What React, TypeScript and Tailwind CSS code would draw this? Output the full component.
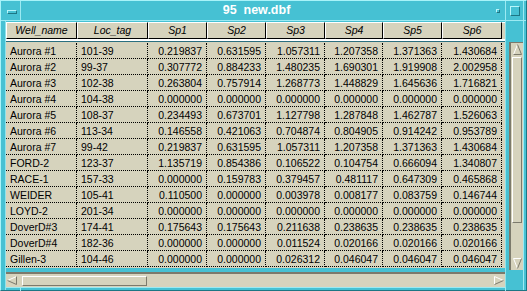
import React from "react";

type Col = { name: string; w: string; left: boolean };

const cols: Col[] = [
  { name: "Well_name", w: "w-[71px]", left: true },
  { name: "Loc_tag", w: "w-[71px]", left: true },
  { name: "Sp1", w: "w-[59px]", left: false },
  { name: "Sp2", w: "w-[59px]", left: false },
  { name: "Sp3", w: "w-[59px]", left: false },
  { name: "Sp4", w: "w-[58px]", left: false },
  { name: "Sp5", w: "w-[59px]", left: false },
  { name: "Sp6", w: "w-[60px]", left: false },
];

const Z = "0.000000";
const rows: string[][] = [
  ["Aurora #1", "101-39", "0.219837", "0.631595", "1.057311", "1.207358", "1.371363", "1.430684"],
  ["Aurora #2", "99-37", "0.307772", "0.884233", "1.480235", "1.690301", "1.919908", "2.002958"],
  ["Aurora #3", "102-38", "0.263804", "0.757914", "1.268773", "1.448829", "1.645636", "1.716821"],
  ["Aurora #4", "104-38", Z, Z, Z, Z, Z, Z],
  ["Aurora #5", "108-37", "0.234493", "0.673701", "1.127798", "1.287848", "1.462787", "1.526063"],
  ["Aurora #6", "113-34", "0.146558", "0.421063", "0.704874", "0.804905", "0.914242", "0.953789"],
  ["Aurora #7", "99-42", "0.219837", "0.631595", "1.057311", "1.207358", "1.371363", "1.430684"],
  ["FORD-2", "123-37", "1.135719", "0.854386", "0.106522", "0.104754", "0.666094", "1.340807"],
  ["RACE-1", "157-33", Z, "0.159783", "0.379457", "0.481117", "0.647309", "0.465868"],
  ["WEIDER", "105-41", "0.110500", Z, "0.003978", "0.008177", "0.083759", "0.146744"],
  ["LOYD-2", "201-34", Z, Z, Z, Z, Z, Z],
  ["DoverD#3", "174-41", "0.175643", "0.175643", "0.211638", "0.238635", "0.238635", "0.238635"],
  ["DoverD#4", "182-36", Z, Z, "0.011524", "0.020166", "0.020166", "0.020166"],
  ["Gillen-3", "104-46", Z, Z, "0.026312", "0.046047", "0.046047", "0.046047"],
];

function Arrow({ dir }: { dir: "up" | "down" | "left" | "right" }) {
  // 9x10 triangles with motif style bevel
  if (dir === "up")
    return (
      <svg width="9" height="11" viewBox="0 0 9 11" className="block">
        <polygon points="4.5,0.5 8.5,10.5 0.5,10.5" fill="#d6d3bd" />
        <line x1="4.5" y1="0.5" x2="0.5" y2="10.5" stroke="#ffffff" strokeWidth="1" />
        <line x1="4.5" y1="0.5" x2="8.5" y2="10.5" stroke="#7c7a6c" strokeWidth="1" />
        <line x1="0.5" y1="10.5" x2="8.5" y2="10.5" stroke="#7c7a6c" strokeWidth="1" />
      </svg>
    );
  if (dir === "down")
    return (
      <svg width="9" height="11" viewBox="0 0 9 11" className="block">
        <polygon points="0.5,0.5 8.5,0.5 4.5,10.5" fill="#d6d3bd" />
        <line x1="0.5" y1="0.5" x2="8.5" y2="0.5" stroke="#ffffff" strokeWidth="1" />
        <line x1="0.5" y1="0.5" x2="4.5" y2="10.5" stroke="#ffffff" strokeWidth="1" />
        <line x1="8.5" y1="0.5" x2="4.5" y2="10.5" stroke="#7c7a6c" strokeWidth="1" />
      </svg>
    );
  if (dir === "left")
    return (
      <svg width="10" height="9" viewBox="0 0 10 9" className="block">
        <polygon points="0.5,4.5 9.5,0.5 9.5,8.5" fill="#d6d3bd" />
        <line x1="0.5" y1="4.5" x2="9.5" y2="0.5" stroke="#ffffff" strokeWidth="1" />
        <line x1="0.5" y1="4.5" x2="9.5" y2="8.5" stroke="#7c7a6c" strokeWidth="1" />
        <line x1="9.5" y1="0.5" x2="9.5" y2="8.5" stroke="#7c7a6c" strokeWidth="1" />
      </svg>
    );
  return (
    <svg width="10" height="9" viewBox="0 0 10 9" className="block">
      <polygon points="0.5,0.5 9.5,4.5 0.5,8.5" fill="#d6d3bd" />
      <line x1="0.5" y1="0.5" x2="9.5" y2="4.5" stroke="#ffffff" strokeWidth="1" />
      <line x1="0.5" y1="0.5" x2="0.5" y2="8.5" stroke="#ffffff" strokeWidth="1" />
      <line x1="0.5" y1="8.5" x2="9.5" y2="4.5" stroke="#7c7a6c" strokeWidth="1" />
    </svg>
  );
}

export default function App() {
  return (
    <div className="relative w-[527px] h-[291px] overflow-hidden bg-[#46c1d3] font-['Liberation_Sans',Arial,sans-serif] text-black">
      <div className="flex flex-col h-full">
        {/* Title bar */}
        <div className="h-[21px] shrink-0 flex border-b border-[#9ceaf2]">
          <div className="w-[21px] shrink-0 border-r border-[#9ceaf2] flex items-center justify-center">
            <div className="w-[10px] h-[4px] mt-[3px] ml-[4px] bg-[#46c1d3] border-t border-l border-[#b8f6fb] border-r-[#1d7684] border-b-[#1d7684] border-r border-b" />
          </div>
          <div className="flex-1 text-center text-white font-bold text-[12.5px] leading-[21px] whitespace-pre">
            95  new.dbf
          </div>
          <div className="w-[13px] shrink-0 flex items-center justify-center">
            <div className="w-[4px] h-[4px] mr-[2px] mt-[1px] bg-[#46c1d3] border border-t-[#b8f6fb] border-l-[#b8f6fb] border-r-[#1d7684] border-b-[#1d7684]" />
          </div>
          <div className="w-[18px] shrink-0 border-l border-[#9ceaf2] flex items-center justify-center">
            <div className="w-[10px] h-[10px] ml-[1px] mt-[1px] border border-t-[#b8f6fb] border-l-[#b8f6fb] border-r-[#1d7684] border-b-[#1d7684]" />
          </div>
          <div className="w-[4px] shrink-0 border-l border-[#9ceaf2]" />
        </div>

        {/* Main */}
        <div className="flex-1 flex">
          <div className="w-[6px] shrink-0 border-r border-[#8ee3ec]" />
          <div className="w-[499px] shrink-0 flex flex-col">
            <div className="h-[1px] shrink-0" />
            {/* header */}
            <div className="h-[17px] shrink-0 flex bg-[#d6d3bd]">
              {cols.map((c) => (
                <div
                  key={c.name}
                  className={`${c.w} shrink-0 h-[17px] border border-t-white border-l-white border-r-black border-b-black italic text-[10.5px] leading-[15px] text-center`}
                >
                  {c.name}
                </div>
              ))}
              <div className="flex-1 border-t border-white" />
            </div>
            <div className="h-[2px] shrink-0 bg-white" />
            <div className="h-[1px] shrink-0 bg-[#2a6f80]" />
            {/* body */}
            <div className="h-[226px] shrink-0 bg-[#d6d3bd] pt-[1px] overflow-hidden">
              {rows.map((r, i) => (
                <div key={i} className="flex h-[16px]">
                  {r.map((v, j) => (
                    <div
                      key={j}
                      className={`${cols[j].w} shrink-0 h-[16px] border-r border-b border-dotted border-black text-[10.5px] leading-[16px] whitespace-nowrap ${
                        cols[j].left ? "pl-[4px] text-left" : "pr-[4px] text-right"
                      }`}
                    >
                      {v}
                    </div>
                  ))}
                </div>
              ))}
            </div>
            <div className="h-[4px] shrink-0" />
            {/* horizontal scrollbar */}
            <div className="h-[15px] shrink-0 bg-[#d6d3bd] border-t-2 border-[#7c7a6c] flex items-center">
              <div className="ml-[1px] w-[10px] flex items-center">
                <Arrow dir="left" />
              </div>
              <div className="ml-[5px] w-[125px] h-[10px] border border-t-white border-l-white border-r-[#7c7a6c] border-b-[#7c7a6c]" />
              <div className="flex-1" />
              <div className="mr-[1px] w-[10px] flex items-center">
                <Arrow dir="right" />
              </div>
            </div>
            <div className="flex-1 border-t border-[#9ceaf2]" />
          </div>
          <div className="w-[4px] shrink-0 border-l border-[#8ee3ec]" />
          {/* vertical scrollbar column */}
          <div className="w-[14px] shrink-0 flex flex-col">
            <div className="h-[21px] shrink-0" />
            <div className="h-[228px] shrink-0 bg-[#d6d3bd] border-l-2 border-t border-[#7c7a6c] flex flex-col items-center">
              <div className="mt-[1px]">
                <Arrow dir="up" />
              </div>
              <div className="mt-[2px] w-[10px] h-[166px] border border-t-white border-l-white border-r-[#7c7a6c] border-b-[#7c7a6c]" />
              <div className="flex-1" />
              <div className="mb-[1px]">
                <Arrow dir="down" />
              </div>
            </div>
          </div>
          <div className="w-[4px] shrink-0 border-l border-[#9ceaf2]" />
        </div>
      </div>

      {/* window frame edges and resize corner marks */}
      <div className="pointer-events-none absolute inset-0 border border-t-[#a8f3f9] border-l-[#a8f3f9] border-r-[#1d7684] border-b-[#1d7684]" />
      <div className="pointer-events-none absolute left-[20px] bottom-0 w-[1px] h-[4px] bg-[#9ceaf2]" />
      <div className="pointer-events-none absolute left-[505px] bottom-0 w-[1px] h-[4px] bg-[#9ceaf2]" />
    </div>
  );
}
